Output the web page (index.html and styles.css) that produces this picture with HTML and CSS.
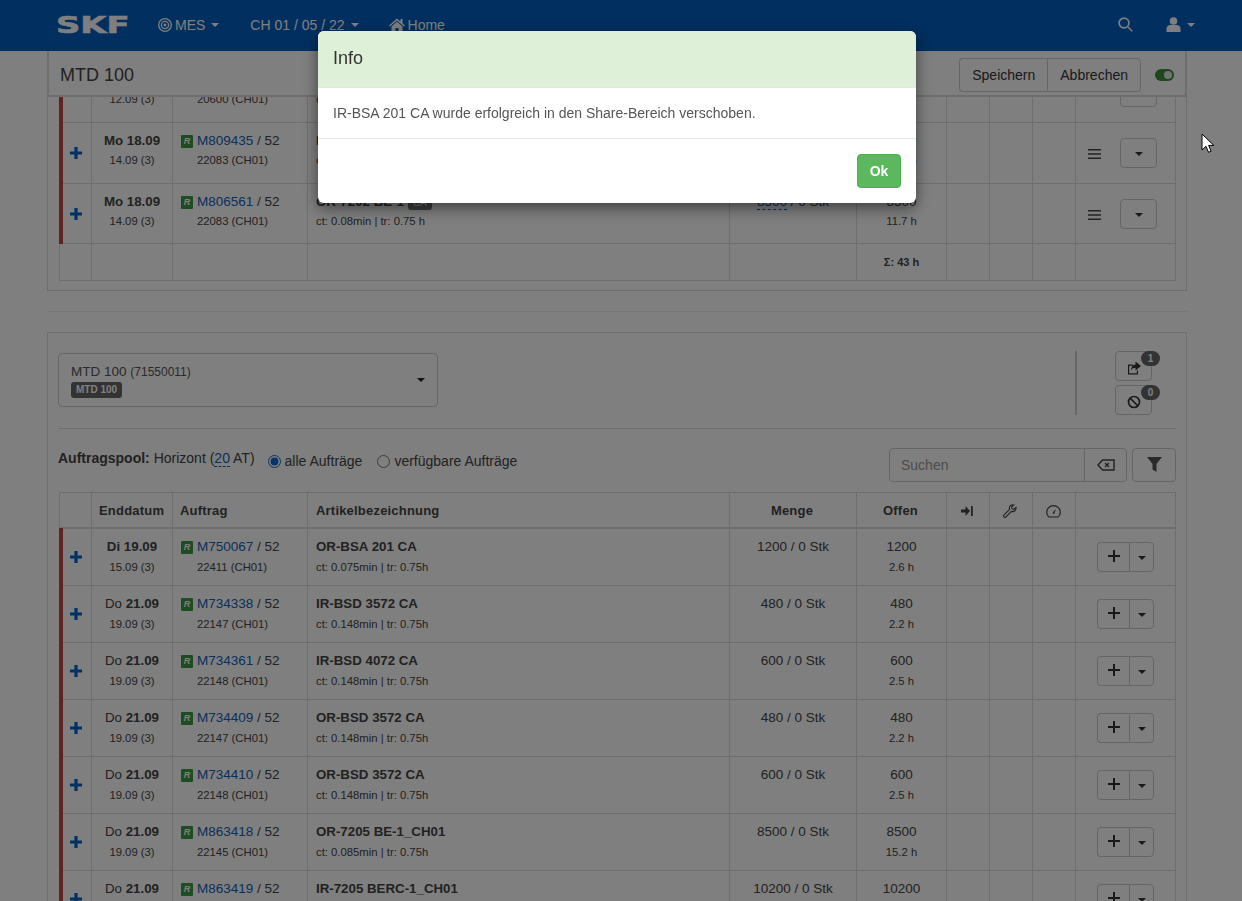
FILE: index.html
```html
<!DOCTYPE html>
<html lang="de">
<head>
	<meta charset="UTF-8">
	<title>MES - MTD 100</title>
	<link rel="stylesheet" href="styles.css">
</head>
<body>
	<svg class="sprites" aria-hidden="true">
		<symbol id="i-plus" viewBox="0 0 12 12"><path d="M4.4 0h3.2v4.4H12v3.2H7.6V12H4.4V7.600H0V4.400h4.400z"/></symbol>
		<symbol id="i-thin-plus" viewBox="0 0 12 12"><path d="M5 0h2v5h5v2H7v5H5V7H0V5h5z"/></symbol>
		<symbol id="i-menu" viewBox="0 0 13 10"><path d="M0 0h13v1.600H0zM0 4.200h13v1.600H0zM0 8.400h13V10H0z"/></symbol>
		<symbol id="i-target" viewBox="0 0 14 14"><g fill="none" stroke="currentColor"><circle cx="7" cy="7" r="6.300" stroke-width="1.300"/><circle cx="7" cy="7" r="3.600" stroke-width="1.300"/></g><circle cx="7" cy="7" r="1.500"/></symbol>
		<symbol id="i-home" viewBox="0 0 16 14"><path d="M8 .5 0 7.400l.9 1L8 2.400l7.100 6 .9-1-2.500-2.200V1h-2v2.500zM2.500 8.500V14h4v-4h3v4h4V8.500L8 3.800z"/></symbol>
		<symbol id="i-search" viewBox="0 0 15 15"><circle cx="6" cy="6" r="4.900" fill="none" stroke="currentColor" stroke-width="1.700"/><path d="m9.500 10.500 1-1 4.300 4.200-1.100 1.100z"/></symbol>
		<symbol id="i-user" viewBox="0 0 14 15"><circle cx="7" cy="4" r="3.800"/><path d="M0 15v-3.500C0 9.300 1.800 8 4 8h6c2.200 0 4 1.300 4 3.500V15z"/></symbol>
		<symbol id="i-share" viewBox="0 0 14 13"><path d="M1 3h5v1.200H2.200v7.600h7.600V9H11v4H1z"/><path d="M8.500 0 14 4.500 8.500 9V6.300C6.500 6.300 5 7 4 9c0-3.500 1.800-5.700 4.500-6z"/></symbol>
		<symbol id="i-ban" viewBox="0 0 14 14"><g fill="none" stroke="currentColor" stroke-width="1.700"><circle cx="7" cy="7" r="5.500"/><path d="m3 3 8 8"/></g></symbol>
		<symbol id="i-erase" viewBox="0 0 18 12"><path fill="none" stroke="currentColor" stroke-width="1.400" d="M5.500 1H17v10H5.500L1 6z"/><path stroke="currentColor" stroke-width="1.300" d="m8 4 4 4m0-4-4 4"/></symbol>
		<symbol id="i-filter" viewBox="0 0 15 15"><path d="M0 0h15L9.500 7v8l-4-2.500V7z"/></symbol>
		<symbol id="i-step" viewBox="0 0 12 10"><path d="M0 3.500h4.500V0L9 5 4.500 10V6.500H0zM10 0h1.800v10H10z"/></symbol>
		<symbol id="i-wrench" viewBox="0 0 14 14"><path fill="none" stroke="currentColor" stroke-width="1.100" d="M13 3.500 10.700 5.300 8.900 4.700 8.500 3 10.700 1C8.500.3 6.300 1.800 6.300 4c0 .6.100 1 .3 1.400L1 10.800c-.7.800-.6 1.500 0 2.100.6.600 1.400.6 2 0l5.400-5.500C11 8.200 13.500 6.300 13 3.500z"/></symbol>
		<symbol id="i-gauge" viewBox="0 0 15 13"><path fill="none" stroke="currentColor" stroke-width="1.200" d="M3 12h9c1.300-1 2.300-2.800 2.300-4.600A6.800 6.800 0 0 0 .7 7.400c0 1.800 1 3.600 2.300 4.600z"/><path d="m10 4-2 5.200-1.500-1.400z"/></symbol>
	</svg>

	<nav class="navbar">
		<span class="brand">SKF</span>
		<a class="nav-item nav-mes"><svg class="ico-14"><use href="#i-target"/></svg>MES<i class="caret"></i></a>
		<a class="nav-item nav-date">CH 01 / 05 / 22<i class="caret"></i></a>
		<a class="nav-item nav-home"><svg class="ico-home"><use href="#i-home"/></svg>Home</a>
		<a class="nav-item nav-search"><svg class="ico-15"><use href="#i-search"/></svg></a>
		<a class="nav-item nav-user"><svg class="ico-15"><use href="#i-user"/></svg><i class="caret"></i></a>
	</nav>

	<main class="page">
		<section class="panel panel-top">
			<header class="panel-head">
				<h3>MTD 100</h3>
				<div class="btn-group">
					<button class="btn">Speichern</button>
					<button class="btn">Abbrechen</button>
				</div>
				<span class="toggle"></span>
			</header>
			<div class="clip">
				<table class="orders">
					<colgroup>
						<col class="c-add"><col class="c-date"><col class="c-order"><col class="c-name"><col class="c-qty"><col class="c-open"><col class="c-ico"><col class="c-ico"><col class="c-ico"><col class="c-act">
					</colgroup>
					<tbody>
						<tr class="tall">
							<td class="flag"><svg class="plus"><use href="#i-plus"/></svg></td>
							<td class="center"><b>Mo 18.09</b><small>12.09 (3)</small></td>
							<td><span class="tag">R</span><a class="link">M809102</a> / 52<small class="indent">20600 (CH01)</small></td>
							<td><b>OR-7202 BE-1</b><small>ct: 0.08min | tr: 0.75 h</small></td>
							<td class="center">4200 / 0 Stk</td>
							<td class="center">4200<small>5.9 h</small></td>
							<td></td><td></td><td></td>
							<td class="actions"><svg class="menu"><use href="#i-menu"/></svg><button class="btn btn-drop"><i class="caret"></i></button></td>
						</tr>
						<tr class="tall">
							<td class="flag"><svg class="plus"><use href="#i-plus"/></svg></td>
							<td class="center"><b>Mo 18.09</b><small>14.09 (3)</small></td>
							<td><span class="tag">R</span><a class="link">M809435</a> / 52<small class="indent">22083 (CH01)</small></td>
							<td><b>IR-7202 BE-1</b><small>ct: 0.08min | tr: 0.75 h</small></td>
							<td class="center">8500 / 0 Stk</td>
							<td class="center">8500<small>11.7 h</small></td>
							<td></td><td></td><td></td>
							<td class="actions"><svg class="menu"><use href="#i-menu"/></svg><button class="btn btn-drop"><i class="caret"></i></button></td>
						</tr>
						<tr class="tall-b">
							<td class="flag"><svg class="plus"><use href="#i-plus"/></svg></td>
							<td class="center"><b>Mo 18.09</b><small>14.09 (3)</small></td>
							<td><span class="tag">R</span><a class="link">M806561</a> / 52<small class="indent">22083 (CH01)</small></td>
							<td><b>OR-7202 BE-1</b> <span class="mini-label">CA</span><small>ct: 0.08min | tr: 0.75 h</small></td>
							<td class="center"><a class="link dashed">8500</a> / 0 Stk</td>
							<td class="center">8500<small>11.7 h</small></td>
							<td></td><td></td><td></td>
							<td class="actions"><svg class="menu"><use href="#i-menu"/></svg><button class="btn btn-drop"><i class="caret"></i></button></td>
						</tr>
						<tr class="sum">
							<td></td><td></td><td></td><td></td><td></td>
							<td class="center"><strong>Σ: 43 h</strong></td>
							<td></td><td></td><td></td><td></td>
						</tr>
					</tbody>
				</table>
			</div>
		</section>

		<hr class="split">

		<section class="panel panel-pool">
			<div class="toolbar">
				<div class="machine-select">
					<div>
						<span>MTD 100 <small>(71550011)</small></span>
						<span class="machine-label">MTD 100</span>
					</div>
					<i class="caret"></i>
				</div>
				<div class="tools">
					<button class="btn btn-tool"><svg class="ico-14"><use href="#i-share"/></svg><span class="count">1</span></button>
					<button class="btn btn-tool"><svg class="ico-14"><use href="#i-ban"/></svg><span class="count">0</span></button>
				</div>
			</div>
			<hr class="rule">
			<div class="pool-bar">
				<div class="pool-title">
					<b>Auftragspool:</b> Horizont (<a class="link dashed">20</a> AT)
				</div>
				<label class="radio"><input type="radio" name="pool" checked>alle Aufträge</label>
				<label class="radio"><input type="radio" name="pool">verfügbare Aufträge</label>
				<div class="search">
					<span class="search-input">Suchen</span>
					<span class="search-clear"><svg class="ico-erase"><use href="#i-erase"/></svg></span>
				</div>
				<button class="btn btn-filter"><svg class="ico-15"><use href="#i-filter"/></svg></button>
			</div>
			<table class="orders">
				<colgroup>
					<col class="c-add"><col class="c-date"><col class="c-order"><col class="c-name"><col class="c-qty"><col class="c-open"><col class="c-ico"><col class="c-ico"><col class="c-ico"><col class="c-act">
				</colgroup>
				<thead>
					<tr>
						<th></th>
						<th class="center">Enddatum</th>
						<th class="center-left">Auftrag</th>
						<th>Artikelbezeichnung</th>
						<th class="center">Menge</th>
						<th class="center">Offen</th>
						<th class="center"><svg class="ico-step"><use href="#i-step"/></svg></th>
						<th class="center"><svg class="ico-14"><use href="#i-wrench"/></svg></th>
						<th class="center"><svg class="ico-gauge"><use href="#i-gauge"/></svg></th>
						<th></th>
					</tr>
				</thead>
				<tbody>
					<tr>
						<td class="flag"><svg class="plus"><use href="#i-plus"/></svg></td>
						<td class="center"><b>Di 19.09</b><small>15.09 (3)</small></td>
						<td><span class="tag">R</span><a class="link">M750067</a> / 52<small class="indent">22411 (CH01)</small></td>
						<td><b>OR-BSA 201 CA</b><small>ct: 0.075min | tr: 0.75h</small></td>
						<td class="center">1200 / 0 Stk</td>
						<td class="center">1200<small>2.6 h</small></td>
						<td></td><td></td><td></td>
						<td class="actions"><span class="split-btn"><button class="btn btn-add"><svg class="ico-12"><use href="#i-thin-plus"/></svg></button><button class="btn btn-more"><i class="caret"></i></button></span></td>
					</tr>
					<tr>
						<td class="flag"><svg class="plus"><use href="#i-plus"/></svg></td>
						<td class="center"><b><span class="day">Do</span> 21.09</b><small>19.09 (3)</small></td>
						<td><span class="tag">R</span><a class="link">M734338</a> / 52<small class="indent">22147 (CH01)</small></td>
						<td><b>IR-BSD 3572 CA</b><small>ct: 0.148min | tr: 0.75h</small></td>
						<td class="center">480 / 0 Stk</td>
						<td class="center">480<small>2.2 h</small></td>
						<td></td><td></td><td></td>
						<td class="actions"><span class="split-btn"><button class="btn btn-add"><svg class="ico-12"><use href="#i-thin-plus"/></svg></button><button class="btn btn-more"><i class="caret"></i></button></span></td>
					</tr>
					<tr>
						<td class="flag"><svg class="plus"><use href="#i-plus"/></svg></td>
						<td class="center"><b><span class="day">Do</span> 21.09</b><small>19.09 (3)</small></td>
						<td><span class="tag">R</span><a class="link">M734361</a> / 52<small class="indent">22148 (CH01)</small></td>
						<td><b>IR-BSD 4072 CA</b><small>ct: 0.148min | tr: 0.75h</small></td>
						<td class="center">600 / 0 Stk</td>
						<td class="center">600<small>2.5 h</small></td>
						<td></td><td></td><td></td>
						<td class="actions"><span class="split-btn"><button class="btn btn-add"><svg class="ico-12"><use href="#i-thin-plus"/></svg></button><button class="btn btn-more"><i class="caret"></i></button></span></td>
					</tr>
					<tr>
						<td class="flag"><svg class="plus"><use href="#i-plus"/></svg></td>
						<td class="center"><b><span class="day">Do</span> 21.09</b><small>19.09 (3)</small></td>
						<td><span class="tag">R</span><a class="link">M734409</a> / 52<small class="indent">22147 (CH01)</small></td>
						<td><b>OR-BSD 3572 CA</b><small>ct: 0.148min | tr: 0.75h</small></td>
						<td class="center">480 / 0 Stk</td>
						<td class="center">480<small>2.2 h</small></td>
						<td></td><td></td><td></td>
						<td class="actions"><span class="split-btn"><button class="btn btn-add"><svg class="ico-12"><use href="#i-thin-plus"/></svg></button><button class="btn btn-more"><i class="caret"></i></button></span></td>
					</tr>
					<tr>
						<td class="flag"><svg class="plus"><use href="#i-plus"/></svg></td>
						<td class="center"><b><span class="day">Do</span> 21.09</b><small>19.09 (3)</small></td>
						<td><span class="tag">R</span><a class="link">M734410</a> / 52<small class="indent">22148 (CH01)</small></td>
						<td><b>OR-BSD 3572 CA</b><small>ct: 0.148min | tr: 0.75h</small></td>
						<td class="center">600 / 0 Stk</td>
						<td class="center">600<small>2.5 h</small></td>
						<td></td><td></td><td></td>
						<td class="actions"><span class="split-btn"><button class="btn btn-add"><svg class="ico-12"><use href="#i-thin-plus"/></svg></button><button class="btn btn-more"><i class="caret"></i></button></span></td>
					</tr>
					<tr>
						<td class="flag"><svg class="plus"><use href="#i-plus"/></svg></td>
						<td class="center"><b><span class="day">Do</span> 21.09</b><small>19.09 (3)</small></td>
						<td><span class="tag">R</span><a class="link">M863418</a> / 52<small class="indent">22145 (CH01)</small></td>
						<td><b>OR-7205 BE-1_CH01</b><small>ct: 0.085min | tr: 0.75h</small></td>
						<td class="center">8500 / 0 Stk</td>
						<td class="center">8500<small>15.2 h</small></td>
						<td></td><td></td><td></td>
						<td class="actions"><span class="split-btn"><button class="btn btn-add"><svg class="ico-12"><use href="#i-thin-plus"/></svg></button><button class="btn btn-more"><i class="caret"></i></button></span></td>
					</tr>
					<tr>
						<td class="flag"><svg class="plus"><use href="#i-plus"/></svg></td>
						<td class="center"><b><span class="day">Do</span> 21.09</b><small>19.09 (3)</small></td>
						<td><span class="tag">R</span><a class="link">M863419</a> / 52<small class="indent">22145 (CH01)</small></td>
						<td><b>IR-7205 BERC-1_CH01</b><small>ct: 0.085min | tr: 0.75h</small></td>
						<td class="center">10200 / 0 Stk</td>
						<td class="center">10200<small>18.2 h</small></td>
						<td></td><td></td><td></td>
						<td class="actions"><span class="split-btn"><button class="btn btn-add"><svg class="ico-12"><use href="#i-thin-plus"/></svg></button><button class="btn btn-more"><i class="caret"></i></button></span></td>
					</tr>
				</tbody>
			</table>
		</section>
	</main>

	<div class="backdrop"></div>

	<div class="modal-wrap">
		<div class="modal">
			<div class="modal-head">Info</div>
			<div class="modal-body">IR-BSA 201 CA wurde erfolgreich in den Share-Bereich verschoben.</div>
			<div class="modal-foot"><button class="btn-ok">Ok</button></div>
		</div>
	</div>

	<svg class="cursor" viewBox="0 0 13 21"><path d="M1 1v16l4-3.700 2.500 6 2.600-1.100-2.500-5.800h5.200z" fill="#fff" stroke="#000" stroke-width="1"/></svg>
</body>
</html>
```

FILE: styles.css
```css
* { box-sizing: border-box; }

html, body { height: 100%; }

body {
	margin     : 0;
	overflow   : hidden;
	font-family: 'Liberation Sans', Arial, sans-serif;
	font-size  : 13.5px;
	line-height: 20px;
	color      : #444;
	background : #fff;
}

.sprites { display: none; }

svg { fill: currentColor; display: inline-block; }

.ico-12 { width: 12px; height: 12px; }
.ico-14 { width: 14px; height: 14px; }
.ico-15 { width: 15px; height: 15px; }

.caret {
	display       : inline-block;
	width         : 0;
	height        : 0;
	margin-left   : 6px;
	vertical-align: middle;
	border-top    : 4px solid currentColor;
	border-left   : 4px solid transparent;
	border-right  : 4px solid transparent;
}

/* navbar */
.navbar {
	display    : flex;
	align-items: center;
	height     : 51px;
	padding    : 0 47px 2px 56px;
	background : #005fc0;
	color      : #fff;
	font-size  : 14px;
}

.brand {
	width              : 72px;
	font-family        : 'DejaVu Sans', sans-serif;
	font-weight        : 700;
	font-size          : 23px;
	-webkit-text-stroke: .6px currentColor;
	transform          : scale(1.47, 1);
	transform-origin   : left center;
}

.nav-item { display: flex; align-items: center; }

.nav-mes { margin-left: 30px; }
.nav-mes svg { margin-right: 3px; }
.nav-date { margin-left: 31px; }
.nav-home { margin-left: 30px; }
.ico-home { width: 16px; height: 14px; margin-right: 3px; }
.nav-search { margin-left: auto; }
.nav-user { margin-left: 33px; }

/* page */
.page { padding: 0 55px 0 47px; }

.panel {
	border    : 1px solid #ddd;
	background: #fff;
}

.panel-top { padding: 0 10px 9px 11px; border-top: 0; }

.panel-head {
	display      : flex;
	align-items  : center;
	height       : 46px;
	margin       : 0 -10px 0 -11px;
	padding      : 4px 11px 0;
	background   : #fff;
	border       : 1px solid #ddd;
	border-top   : 0;
	border-bottom: 2px solid #ddd;
}

.panel-head h3 {
	margin     : 0 auto 0 0;
	font-size  : 18px;
	font-weight: 400;
}

.btn-group { display: flex; }

.btn {
	height       : 34px;
	padding      : 0 12px;
	border       : 1px solid #ccc;
	border-radius: 4px;
	background   : #fff;
	color        : #333;
	font         : inherit;
	font-size    : 14px;
}

.btn-group .btn:first-child { border-radius: 4px 0 0 4px; border-right: 0; }
.btn-group .btn:last-child { border-radius: 0 4px 4px 0; }

.toggle {
	position     : relative;
	width        : 19px;
	height       : 12px;
	margin-left  : 14px;
	border-radius: 6px;
	background   : #3c8f3c;
}

.toggle::after {
	content      : '';
	position     : absolute;
	top          : 2px;
	right        : 2px;
	width        : 8px;
	height       : 8px;
	border-radius: 50%;
	background   : #e4e4e4;
}

.clip { height: 184px; overflow: hidden; }
.clip .orders { margin-top: -36px; }
.clip .orders small { line-height: 19px; }
.clip tr:first-child .plus, .clip tr:first-child .menu { visibility: hidden; }

.orders {
	width          : 1116px;
	table-layout   : fixed;
	border-collapse: collapse;
}

.c-add { width: 32px; }
.c-date { width: 81px; }
.c-order { width: 135px; }
.c-name { width: 422px; }
.c-qty { width: 127px; }
.c-open { width: 90px; }
.c-ico { width: 43px; }
.c-act { width: 100px; }

.orders th, .orders td {
	padding       : 8px;
	border        : 1px solid #ddd;
	text-align    : left;
	vertical-align: top;
}

.orders th {
	height        : 35px;
	padding       : 7px 8px 5px;
	font-size     : 13px;
	letter-spacing: .2px;
	vertical-align: middle;
	border-bottom : 2px solid #ddd;
}

.orders th.center { padding: 7px 9px 5px 7px; }
.orders th.center-left { padding-left: 7px; }

.orders th svg { vertical-align: middle; }

.orders td { height: 57px; }
.orders tr.tall td { height: 61px; }
.orders tr.tall-b td { height: 60px; }
.orders tr.sum td { height: 35px; vertical-align: middle; }

.orders .center { text-align: center; }

.orders b { font-size: 13.3px; }

.orders small {
	display    : block;
	font-size  : 11.3px;
	line-height: 20px;
}

.orders strong { font-size: 11px; }

.orders small.indent { padding-left: 16px; }

.orders .flag {
	position      : relative;
	vertical-align: middle;
	padding       : 0;
}

.flag::before {
	content   : '';
	position  : absolute;
	top       : -1px;
	bottom    : -1px;
	left      : -1px;
	width     : 4px;
	background: #c04644;
}

.plus {
	display: block;
	width  : 12px;
	height : 12px;
	margin : 0 auto;
	color  : #0064c8;
}

.day { font-weight: 400; }

.tag {
	display       : inline-block;
	width         : 12px;
	height        : 13px;
	margin-right  : 4px;
	border-radius : 1px;
	background    : #3c9a42;
	color         : #fff;
	font-size     : 9px;
	font-style    : italic;
	font-weight   : 700;
	line-height   : 13px;
	text-align    : center;
	vertical-align: 1px;
}

.link { color: #1460b8; }

.dashed { border-bottom: 1px dashed currentColor; }

.mini-label {
	display      : inline-block;
	padding      : 0 5px;
	border-radius: 3px;
	background   : #777;
	color        : #fff;
	font-size    : 10px;
	line-height  : 14px;
}

.orders .actions { padding: 0 18px 0 0; vertical-align: middle; text-align: right; }

.menu { width: 13px; height: 10px; margin-right: 19px; vertical-align: middle; }

.btn-drop { width: 37px; height: 30px; padding: 0; }
.btn-drop .caret { margin: 0; }

.split-btn { display: inline-flex; vertical-align: middle; }

.btn-add {
	width        : 32px;
	height       : 30px;
	padding      : 0;
	border-right : 0;
	border-radius: 4px 0 0 4px;
}

.btn-more {
	width        : 25px;
	height       : 30px;
	padding      : 0;
	border-radius: 0 4px 4px 0;
}

.btn-more .caret { margin: 0; }

.orders .actions:has(.split-btn) { padding-right: 21px; }

.split {
	height    : 1px;
	margin    : 20px 0;
	border    : 0;
	background: #eee;
}

/* pool */
.panel-pool { padding: 20px 10px 0 10px; }
.panel-pool .orders { margin-left: 1px; }

.toolbar {
	display        : flex;
	justify-content: space-between;
	height         : 54px;
}

.machine-select {
	display        : flex;
	align-items    : center;
	justify-content: space-between;
	width          : 380px;
	height         : 54px;
	padding        : 0 12px;
	border         : 1px solid #ccc;
	border-radius  : 4px;
	color          : #555;
}

.machine-select .caret { color: #222; }

.machine-select > div {
	display       : flex;
	flex-direction: column;
	align-items   : flex-start;
	gap           : 1px;
	line-height   : 17px;
}

.machine-select small { font-size: 12px; }

.machine-label {
	padding      : 0 5px;
	border-radius: 3px;
	background   : #666;
	color        : #fff;
	font-size    : 10px;
	font-weight  : 700;
	line-height  : 16px;
}

.tools {
	display       : flex;
	flex-direction: column;
	align-items   : flex-end;
	gap           : 4px;
	width         : 77px;
	height        : 64px;
	margin        : -2px 24px 0 0;
	border-left   : 2px solid #ccc;
}

.btn-tool {
	position: relative;
	width   : 37px;
	height  : 30px;
	padding : 0;
}

.btn-tool svg { vertical-align: middle; margin-top: 1px; }

.count {
	position     : absolute;
	top          : -1px;
	right        : -9px;
	width        : 19px;
	height       : 15px;
	border-radius: 10px;
	background   : #666;
	color        : #fff;
	font-size    : 10px;
	font-weight  : 700;
	line-height  : 15px;
	text-align   : center;
}

.rule {
	height    : 1px;
	margin    : 21px 0 19px;
	border    : 0;
	background: #ddd;
}

.pool-bar {
	display      : flex;
	align-items  : center;
	height       : 34px;
	margin-bottom: 10px;
	font-size    : 14px;
}

.pool-title { margin-top: -14px; }

.radio {
	display    : flex;
	align-items: center;
	margin-left: 13px;
	margin-top : -8px;
}

.radio + .radio { margin-left: 15px; }

.radio input {
	width       : 13px;
	height      : 13px;
	margin      : 0 4px 0 0;
	accent-color: #0a6ad0;
}

.search {
	display      : flex;
	width        : 238px;
	height       : 34px;
	margin-left  : auto;
	border       : 1px solid #ccc;
	border-radius: 4px;
}

.search-input {
	flex       : 1;
	padding    : 0 11px;
	color      : #999;
	font-size  : 14px;
	line-height: 32px;
}

.search-clear {
	display        : flex;
	align-items    : center;
	justify-content: center;
	width          : 42px;
	border-left    : 1px solid #ccc;
}

.ico-erase { width: 18px; height: 12px; }

.btn-filter {
	width      : 44px;
	margin-left: 5px;
	padding    : 0;
	color      : #555;
}

.btn-filter svg { margin-top: 4px; }

.ico-step { width: 12px; height: 10px; }
.ico-gauge { width: 15px; height: 13px; }

/* modal */
.backdrop {
	position  : fixed;
	inset     : 0;
	background: rgba(0, 0, 0, .5);
}

.modal-wrap {
	position       : fixed;
	inset          : 0 8px 0 0;
	display        : flex;
	justify-content: center;
	align-items    : flex-start;
	padding-top    : 31px;
}

.modal {
	width        : 598px;
	border-radius: 6px;
	background   : #fff;
	box-shadow   : 0 5px 15px rgba(0, 0, 0, .5);
	overflow     : hidden;
	font-size    : 14px;
	color        : #333;
}

.modal-head {
	height       : 57px;
	padding      : 0 15px;
	background   : #dff0d8;
	border-bottom: 1px solid #e5e5e5;
	font-size    : 18px;
	line-height  : 54px;
}

.modal-body {
	height       : 51px;
	padding      : 15px;
	border-bottom: 1px solid #e5e5e5;
	color        : #555;
}

.modal-foot {
	display        : flex;
	justify-content: flex-end;
	height         : 64px;
	padding        : 15px;
}

.btn-ok {
	width        : 44px;
	height       : 34px;
	border       : 1px solid #4cae4c;
	border-radius: 4px;
	background   : #5cb85c;
	color        : #fff;
	font         : inherit;
	font-weight  : 700;
}

.cursor {
	position: fixed;
	top     : 133px;
	left    : 1201px;
	width   : 13px;
	height  : 21px;
}
```
